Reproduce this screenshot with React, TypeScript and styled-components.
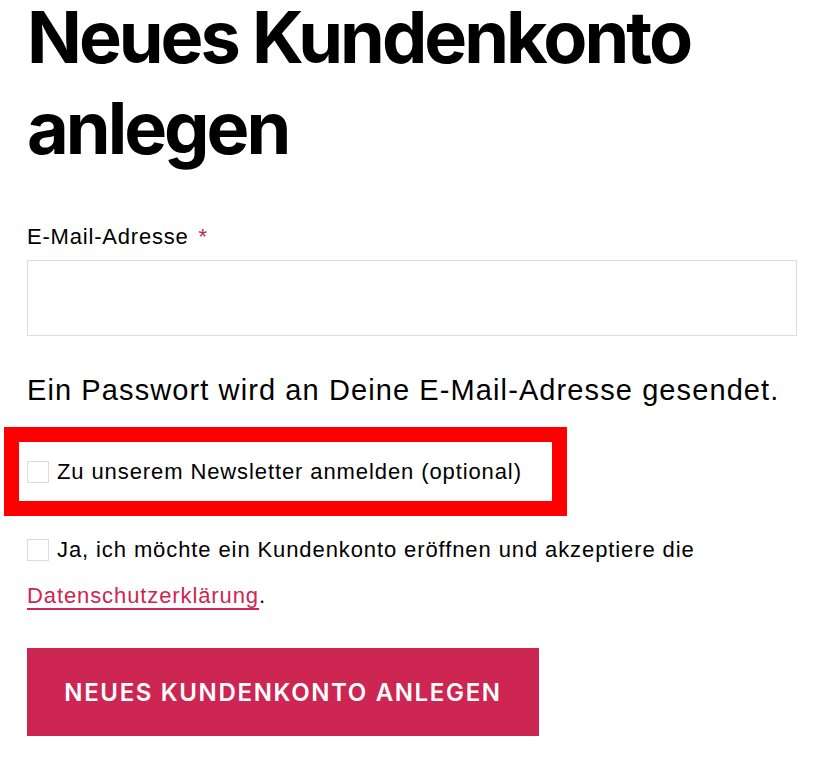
import React from 'react';
import styled, { createGlobalStyle } from 'styled-components';

const GlobalStyle = createGlobalStyle`
  html, body {
    margin: 0;
    padding: 0;
    background: #ffffff;
  }
  body {
    font-family: "Liberation Sans", Arial, sans-serif;
    color: #000000;
    overflow: hidden;
  }
`;

const Page = styled.div`
  width: 770px;
  padding-left: 27px;
  display: flex;
  flex-direction: column;
  align-items: flex-start;
`;

const Title = styled.h1`
  margin: -9px 0 0 0;
  font-family: Inter, "Liberation Sans", sans-serif;
  font-weight: 700;
  font-size: 72px;
  line-height: 91px;
  letter-spacing: -0.0415625em;
  color: #000;
`;

const Form = styled.form`
  display: flex;
  flex-direction: column;
  align-items: flex-start;
  width: 100%;
`;

const FieldLabel = styled.label`
  margin-top: 47px;
  font-size: 22px;
  line-height: 33px;
  letter-spacing: 0.8px;
`;

const Required = styled.span`
  color: #c8284f;
  margin-left: 3px;
`;

const TextInput = styled.input`
  margin-top: 7px;
  width: 100%;
  height: 76px;
  box-sizing: border-box;
  border: 1px solid #dcdcdc;
  background: #fff;
  padding: 0 16px;
  font: inherit;
  font-size: 22px;
  outline: none;
`;

const Note = styled.p`
  margin: 33px 0 0 0;
  font-size: 29px;
  line-height: 42px;
  letter-spacing: 1.1px;
`;

const Highlight = styled.div`
  margin: 16px 0 0 -23px;
  width: 563px;
  height: 89px;
  box-sizing: border-box;
  border: 15px solid #ff0000;
  padding-left: 8px;
  display: flex;
  align-items: center;
`;

const Check = styled.span`
  display: inline-block;
  width: 22px;
  height: 22px;
  box-sizing: border-box;
  border: 1px solid #dcdcdc;
  background: #fff;
  margin-right: 8px;
  vertical-align: -4px;
  flex-shrink: 0;
`;

const CheckText = styled.span`
  font-size: 22px;
  letter-spacing: 0.9px;
`;

const Consent = styled.p`
  margin: 11px 0 0 0;
  font-size: 22px;
  line-height: 46px;
  letter-spacing: 0.9px;
`;

const Link = styled.a`
  color: #cd2653;
  text-decoration: underline;
  text-underline-offset: 5px;
  text-decoration-thickness: 2px;
`;

const SubmitButton = styled.button`
  margin-top: 29px;
  width: 512px;
  height: 88px;
  padding: 0;
  border: none;
  border-radius: 0;
  background: #cd2653;
  color: #fff;
  font-family: Inter, "Liberation Sans", sans-serif;
  font-weight: 600;
  font-size: 24px;
  letter-spacing: 1.65px;
  text-align: center;
  text-transform: uppercase;
  cursor: pointer;
`;

export default function App() {
  return (
    <Page>
      <GlobalStyle />
      <Title>
        Neues Kundenkonto
        <br />
        anlegen
      </Title>
      <Form onSubmit={e => e.preventDefault()}>
        <FieldLabel htmlFor="reg_email">
          E-Mail-Adresse <Required>*</Required>
        </FieldLabel>
        <TextInput id="reg_email" type="email" />
        <Note>Ein Passwort wird an Deine E-Mail-Adresse gesendet.</Note>
        <Highlight>
          <Check />
          <CheckText>Zu unserem Newsletter anmelden (optional)</CheckText>
        </Highlight>
        <Consent>
          <Check />
          Ja, ich möchte ein Kundenkonto eröffnen und akzeptiere die{' '}
          <Link href="#">Datenschutzerklärung</Link>.
        </Consent>
        <SubmitButton type="submit">Neues Kundenkonto anlegen</SubmitButton>
      </Form>
    </Page>
  );
}
